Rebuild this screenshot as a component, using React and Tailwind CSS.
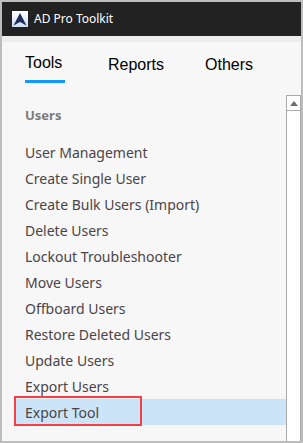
import React from 'react';

const users = [
  'User Management',
  'Create Single User',
  'Create Bulk Users (Import)',
  'Delete Users',
  'Lockout Troubleshooter',
  'Move Users',
  'Offboard Users',
  'Restore Deleted Users',
  'Update Users',
  'Export Users',
  'Export Tool',
];

function Logo() {
  return (
    <svg width="16" height="16" viewBox="0 0 16 16">
      <defs>
        <linearGradient id="lg" x1="0" y1="0" x2="0" y2="1">
          <stop offset="0" stopColor="#ffffff" />
          <stop offset="1" stopColor="#cfe0f2" />
        </linearGradient>
      </defs>
      <rect width="16" height="16" fill="url(#lg)" />
      <path d="M8 2 L14.5 14.5 L8 11 L1.5 14.5 Z" fill="#1c2d5e" />
    </svg>
  );
}

export default function App() {
  const sans = { fontFamily: '"Noto Sans", "Open Sans", sans-serif' };
  return (
    <div className="w-[303px] h-[443px] overflow-hidden bg-[#f7f7f7] border-t-2 border-l-2 border-r-2 border-b-2 border-[#bdbdbd] flex flex-col">
      {/* title bar */}
      <div className="h-[34px] shrink-0 bg-[#222222] flex items-center pl-[10px]">
        <Logo />
        <span className="ml-[6px] text-white text-[12px]" style={sans}>AD Pro Toolkit</span>
      </div>
      <div className="h-[6px] shrink-0 bg-[#ededed]" />

      {/* tabs */}
      <div className="shrink-0 flex pl-[23px] pt-[11px] h-[53px]" style={{ fontFamily: '"Liberation Sans", Arial, sans-serif' }}>
        <div className="w-[83px] flex flex-col items-start">
          <span className="text-[16px] leading-[20px] text-black">Tools</span>
          <span className="mt-[7px] h-[3px] w-[40px] bg-[#1399f7]" />
        </div>
        <div className="w-[97px]">
          <span className="text-[16px] leading-[20px] text-black">Reports</span>
        </div>
        <div>
          <span className="text-[16px] leading-[20px] text-black">Others</span>
        </div>
      </div>

      {/* list + scrollbar */}
      <div className="flex flex-1 min-h-0">
        <div className="flex-1 pl-[12px] pt-[8px]" style={sans}>
          <div className="h-[26px] flex items-center pl-[11px] text-[13px] font-bold text-[#7a7a7a]">Users</div>
          <div className="mt-[10px]">
            {users.map((u) => {
              const active = u === 'Export Tool';
              return (
                <div
                  key={u}
                  className={
                    'relative h-[26px] flex items-center pl-[11px] text-[14px] text-[#4a4448] ' +
                    (active ? 'bg-[#cce4f7]' : '')
                  }
                >
                  {u}
                  {active && (
                    <span className="absolute left-0 -top-[3px] w-[128px] h-[30px] border-2 border-[#f43f45]" />
                  )}
                </div>
              );
            })}
          </div>
          <div className="mt-[8px] h-[26px] flex items-center pl-[11px] text-[13px] font-bold text-[#7a7a7a]">Groups</div>
        </div>
        <div className="w-[15px] shrink-0 bg-white border-l border-r border-t border-[#a9a9a9]">
          <div className="h-[15px] border-b border-[#a9a9a9] flex items-center justify-center">
            <svg width="8" height="5" viewBox="0 0 8 5">
              <path d="M0 5 L4 0 L8 5 Z" fill="#6f6f6f" />
            </svg>
          </div>
        </div>
      </div>
    </div>
  );
}
